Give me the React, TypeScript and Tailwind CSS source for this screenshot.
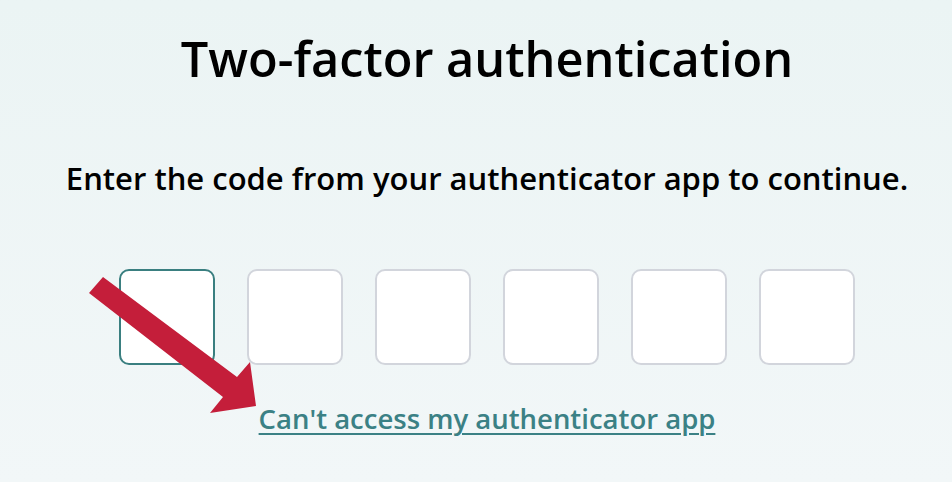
import React from "react";

export default function App() {
  const boxes = [0, 1, 2, 3, 4, 5];
  return (
    <div className="relative w-[952px] h-[482px] overflow-hidden bg-gradient-to-b from-[#ebf4f4] to-[#f2f7f8] text-black" style={{ fontFamily: "'Open Sans', Lato, sans-serif" }}>
      <div className="flex flex-col items-center pl-[22px]">
        <h1 className="mt-[26px] text-[48.7px] leading-[64px] font-semibold">Two-factor authentication</h1>
        <p className="mt-[68px] text-[31px] leading-[40px] font-semibold">Enter the code from your authenticator app to continue.</p>
        <div className="mt-[71px] flex gap-[32px]">
          {boxes.map((i) => (
            <div
              key={i}
              className={`w-[96px] h-[96px] rounded-[10px] bg-white border-2 ${i === 0 ? "border-[#3a7f80]" : "border-[#d2d5dc]"}`}
            />
          ))}
        </div>
        <a href="#" className="mt-[36px] text-[27.5px] leading-[36px] font-semibold text-[#3b8185] underline underline-offset-[4px] decoration-2">
          Can't access my authenticator app
        </a>
      </div>
      <svg className="absolute left-0 top-0" width="952" height="482" viewBox="0 0 952 482">
        <polygon
          points="89,293 103,277 237,377 250,362 256,406 210,413 223,397"
          fill="#c41e3a"
        />
      </svg>
    </div>
  );
}
